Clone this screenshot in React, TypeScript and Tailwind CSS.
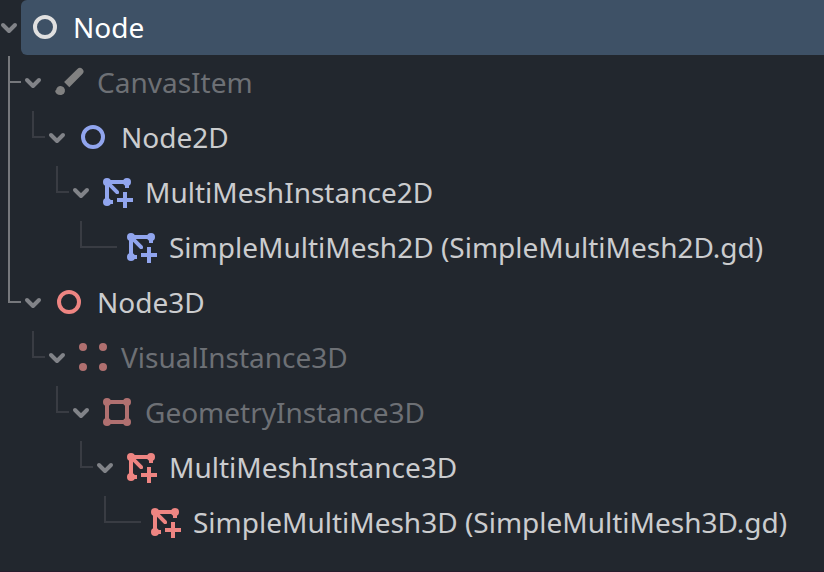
import React from "react";

type Kind = "node" | "brush" | "multimesh" | "visual" | "geometry";
type Item = {
  label: string;
  depth: number;
  kind: Kind;
  color: string;
  text: string;
  leaf?: boolean;
  trunk?: "through" | "end" | "pass";
};

const items: Item[] = [
  { label: "Node", depth: 0, kind: "node", color: "text-[#e0e0e0]", text: "text-white" },
  { label: "CanvasItem", depth: 1, kind: "brush", color: "text-[#818181]", text: "text-[#6d7075]", trunk: "through" },
  { label: "Node2D", depth: 2, kind: "node", color: "text-[#91a5ee]", text: "text-[#cbccce]", trunk: "pass" },
  { label: "MultiMeshInstance2D", depth: 3, kind: "multimesh", color: "text-[#91a5ee]", text: "text-[#cbccce]", trunk: "pass" },
  { label: "SimpleMultiMesh2D (SimpleMultiMesh2D.gd)", depth: 4, kind: "multimesh", color: "text-[#91a5ee]", text: "text-[#cbccce]", leaf: true, trunk: "pass" },
  { label: "Node3D", depth: 1, kind: "node", color: "text-[#ee8582]", text: "text-[#cbccce]", trunk: "end" },
  { label: "VisualInstance3D", depth: 2, kind: "visual", color: "text-[#b07070]", text: "text-[#6d7075]" },
  { label: "GeometryInstance3D", depth: 3, kind: "geometry", color: "text-[#b07070]", text: "text-[#6d7075]" },
  { label: "MultiMeshInstance3D", depth: 4, kind: "multimesh", color: "text-[#ee8582]", text: "text-[#cbccce]" },
  { label: "SimpleMultiMesh3D (SimpleMultiMesh3D.gd)", depth: 5, kind: "multimesh", color: "text-[#ee8582]", text: "text-[#cbccce]", leaf: true },
];

function Icon({ kind, color }: { kind: Kind; color: string }) {
  return (
    <svg viewBox="0 0 32 32" className={`h-8 w-8 shrink-0 ${color}`} fill="currentColor">
      {kind === "node" && <circle cx="16" cy="16" r="10" fill="none" stroke="currentColor" strokeWidth="4" />}
      {kind === "brush" && (
        <>
          <path d="M24.400 3a3.500 3.500 0 0 1 5 5L16.300 21.200l-5.200-5.200z" />
          <path d="M2 24.700c1.200 0 1.300-1 1.500-2.200a4.500 4.500 0 1 1 5.500 6.300C5.700 29.500 2.500 28 2 24.700z" />
        </>
      )}
      {kind === "visual" && (
        <>
          <circle cx="6" cy="6" r="4" />
          <circle cx="26" cy="6" r="4" />
          <circle cx="6" cy="26" r="4" />
          <circle cx="26" cy="26" r="4" />
        </>
      )}
      {kind === "geometry" && (
        <>
          <rect x="6" y="6" width="20" height="20" fill="none" stroke="currentColor" strokeWidth="4" />
          <circle cx="6" cy="6" r="4" />
          <circle cx="26" cy="6" r="4" />
          <circle cx="6" cy="26" r="4" />
          <circle cx="26" cy="26" r="4" />
        </>
      )}
      {kind === "multimesh" && (
        <>
          <circle cx="6" cy="6" r="4" />
          <circle cx="26" cy="6" r="4" />
          <circle cx="6" cy="26" r="4" />
          <path d="M12 26H6V6h20v6M24 16v16M16 24h16" fill="none" stroke="currentColor" strokeWidth="4" />
          <path d="M6 8.800V6h2.800L18 15.200v2L17.200 18h-2z" />
        </>
      )}
    </svg>
  );
}

function Arrow() {
  return (
    <svg viewBox="0 0 18 18" className="h-[18px] w-[18px] shrink-0" fill="none" stroke="#818388" strokeWidth="4" strokeLinecap="round" strokeLinejoin="round">
      <path d="M3 6l6 6 6-6" />
    </svg>
  );
}

function Guides({ item }: { item: Item }) {
  return (
    <>
      {item.trunk && (
        <div className={`absolute left-2 w-0.5 bg-[#76787c] ${item.trunk === "end" ? "top-0 h-7" : item.trunk === "through" ? "top-px h-[54px]" : "top-0 h-[55px]"}`} />
      )}
      {item.depth === 1 && <div className="absolute left-2 top-[26px] h-0.5 w-[13px] bg-[#76787c]" />}
      {item.depth > 1 && (
        <div
          className={`absolute top-px h-[27px] border-b-2 border-l-2 border-[#393c43] ${item.leaf ? "w-[37px]" : "w-[13px]"}`}
          style={{ left: 8 + (item.depth - 1) * 24 }}
        />
      )}
    </>
  );
}

export default function App() {
  return (
    <div className="flex h-[572px] w-[824px] flex-col overflow-hidden border-b border-[#261d2d] bg-[#22272e] font-['Noto_Sans',sans-serif]">
      {items.map((item) => (
        <div key={item.label} className="relative flex h-[55px] shrink-0" style={{ paddingLeft: item.depth * 24 }}>
          <Guides item={item} />
          <div className="flex w-[21px] shrink-0 pt-[19px]">{!item.leaf && <Arrow />}</div>
          <div className={`flex flex-1 pl-2 ${item.depth === 0 ? "rounded-l-[6px] bg-[#3e5166]" : ""}`}>
            <div className="pt-[11px]">
              <Icon kind={item.kind} color={item.color} />
            </div>
            <span className={`whitespace-nowrap pl-3 pt-2 text-[28px] leading-[38px] ${item.text}`}>{item.label}</span>
          </div>
        </div>
      ))}
    </div>
  );
}
